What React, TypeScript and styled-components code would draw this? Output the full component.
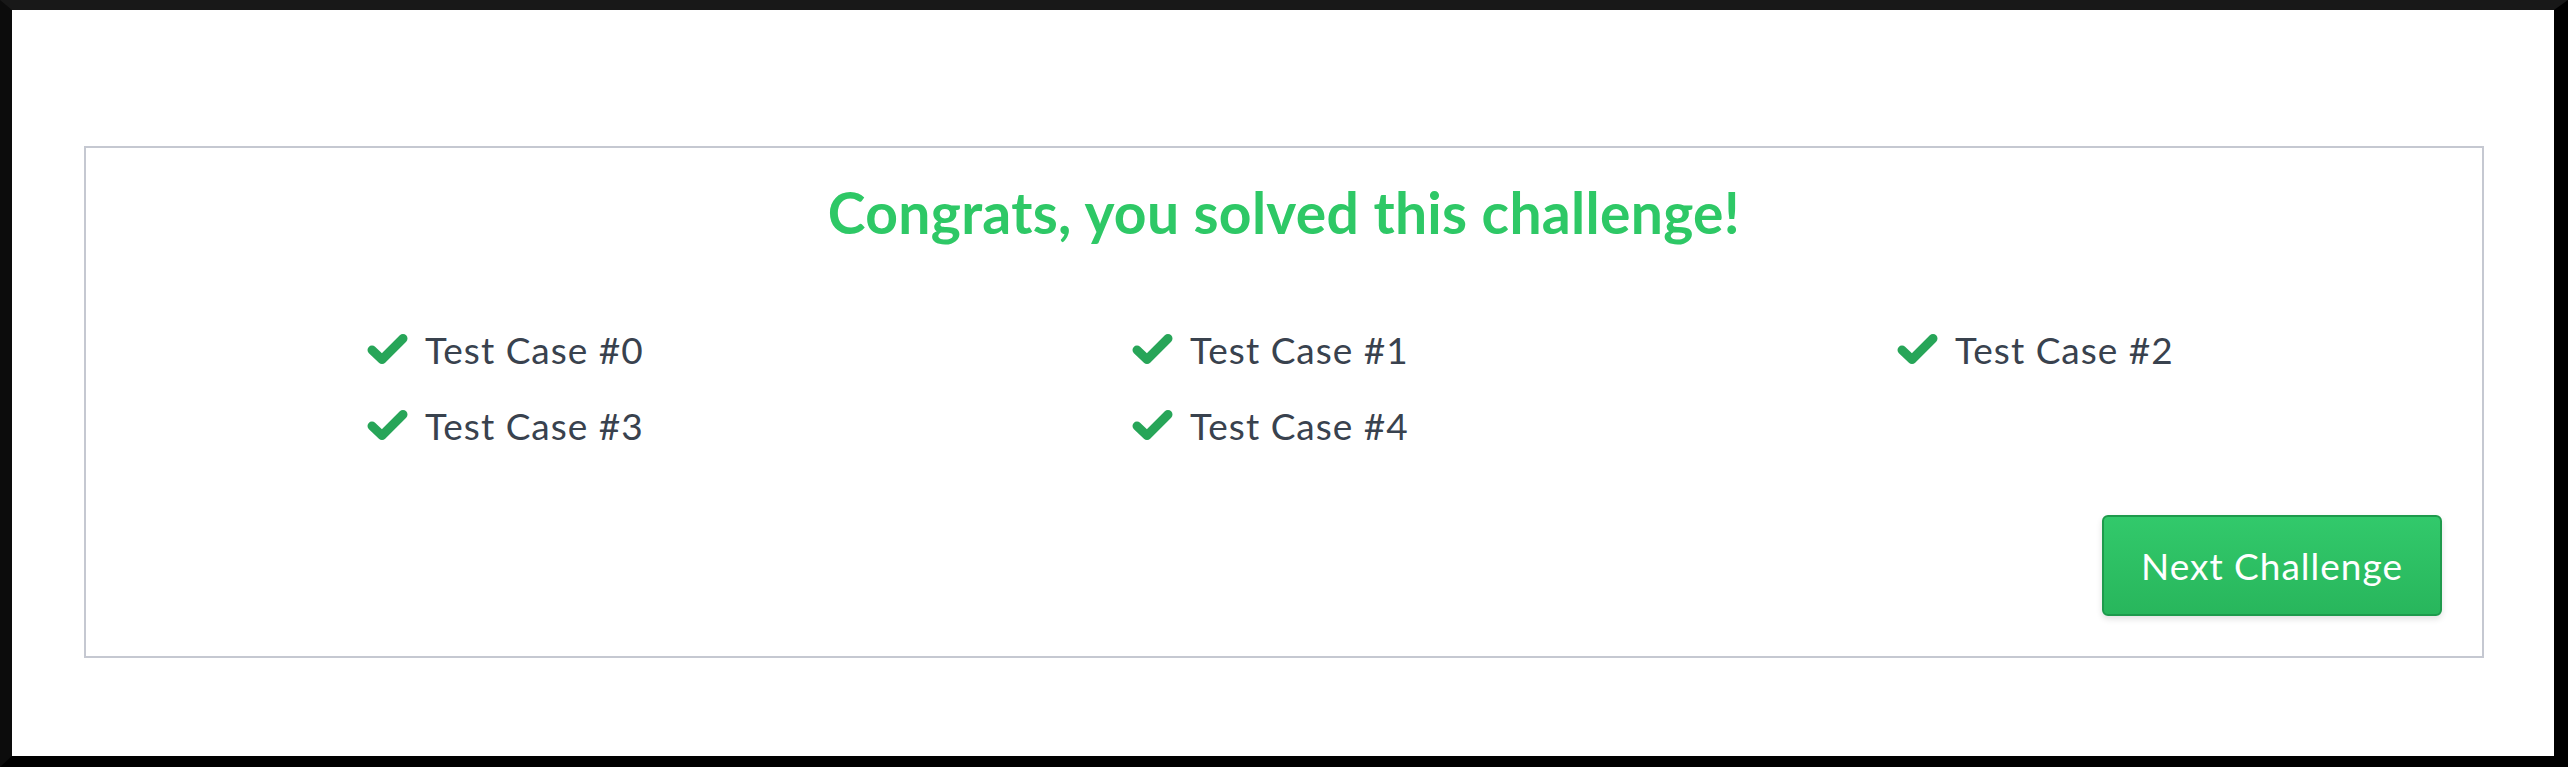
import styled, { createGlobalStyle } from "styled-components";

const GlobalStyle = createGlobalStyle`
  html, body {
    margin: 0;
    padding: 0;
  }
  body {
    font-family: Lato, "Open Sans", sans-serif;
    background: #000;
  }
`;

const testCases = [0, 1, 2, 3, 4];

const Check = () => (
  <CheckSvg viewBox="0 0 41 33" aria-hidden="true">
    <polyline points="5,17 15,26.5 36,5.5" />
  </CheckSvg>
);

const App = () => {
  return (
    <>
      <GlobalStyle />
      <Frame>
        <Page>
          <Panel>
            <Title>Congrats, you solved this challenge!</Title>
            <CaseList>
              {testCases.map((n) => (
                <CaseItem key={n}>
                  <Check />
                  <span>Test Case #{n}</span>
                </CaseItem>
              ))}
            </CaseList>
            <Footer>
              <NextButton type="button">Next Challenge</NextButton>
            </Footer>
          </Panel>
        </Page>
      </Frame>
    </>
  );
};

export default App;

const Frame = styled.div`
  box-sizing: border-box;
  height: 767px;
  border-top: 10px solid #181818;
  border-left: 12px solid #0c0c0c;
  border-right: 14px solid #000;
  border-bottom: 11px solid #000;
  display: flex;
`;

const Page = styled.div`
  flex: 1;
  min-width: 0;
  background: #fff;
  padding: 136px 70px 0 72px;
`;

const Panel = styled.section`
  border: 2px solid #c5c8d1;
  padding: 30px 40px 40px;
  display: flex;
  flex-direction: column;
`;

const Title = styled.h1`
  margin: 0;
  text-align: center;
  color: #2ec866;
  font-size: 57px;
  font-weight: 700;
  line-height: 1.2;
  letter-spacing: 0.3px;
`;

const CaseList = styled.ul`
  list-style: none;
  margin: 82px 0 0;
  padding: 0 0 0 241px;
  display: grid;
  grid-template-columns: 765px 765px minmax(0, 1fr);
  row-gap: 33px;
`;

const CaseItem = styled.li`
  display: flex;
  align-items: center;
  gap: 17px;
  color: #39424e;
  font-size: 37px;
  line-height: 43px;
  letter-spacing: 1px;
`;

const CheckSvg = styled.svg`
  width: 41px;
  height: 33px;
  flex-shrink: 0;
  fill: none;
  stroke: #27a558;
  stroke-width: 9;
  stroke-linecap: round;
  stroke-linejoin: round;
`;

const Footer = styled.div`
  display: flex;
  justify-content: flex-end;
  margin-top: 68px;
`;

const NextButton = styled.button`
  box-sizing: border-box;
  width: 340px;
  height: 101px;
  border: 2px solid #1e9a4c;
  border-radius: 6px;
  background: linear-gradient(to bottom, #32c96b, #28b65c);
  box-shadow: 0 3px 6px rgba(0, 0, 0, 0.12);
  color: #fff;
  font-family: Lato, "Open Sans", sans-serif;
  font-size: 37px;
  font-weight: 400;
  letter-spacing: 1px;
  cursor: pointer;
`;
